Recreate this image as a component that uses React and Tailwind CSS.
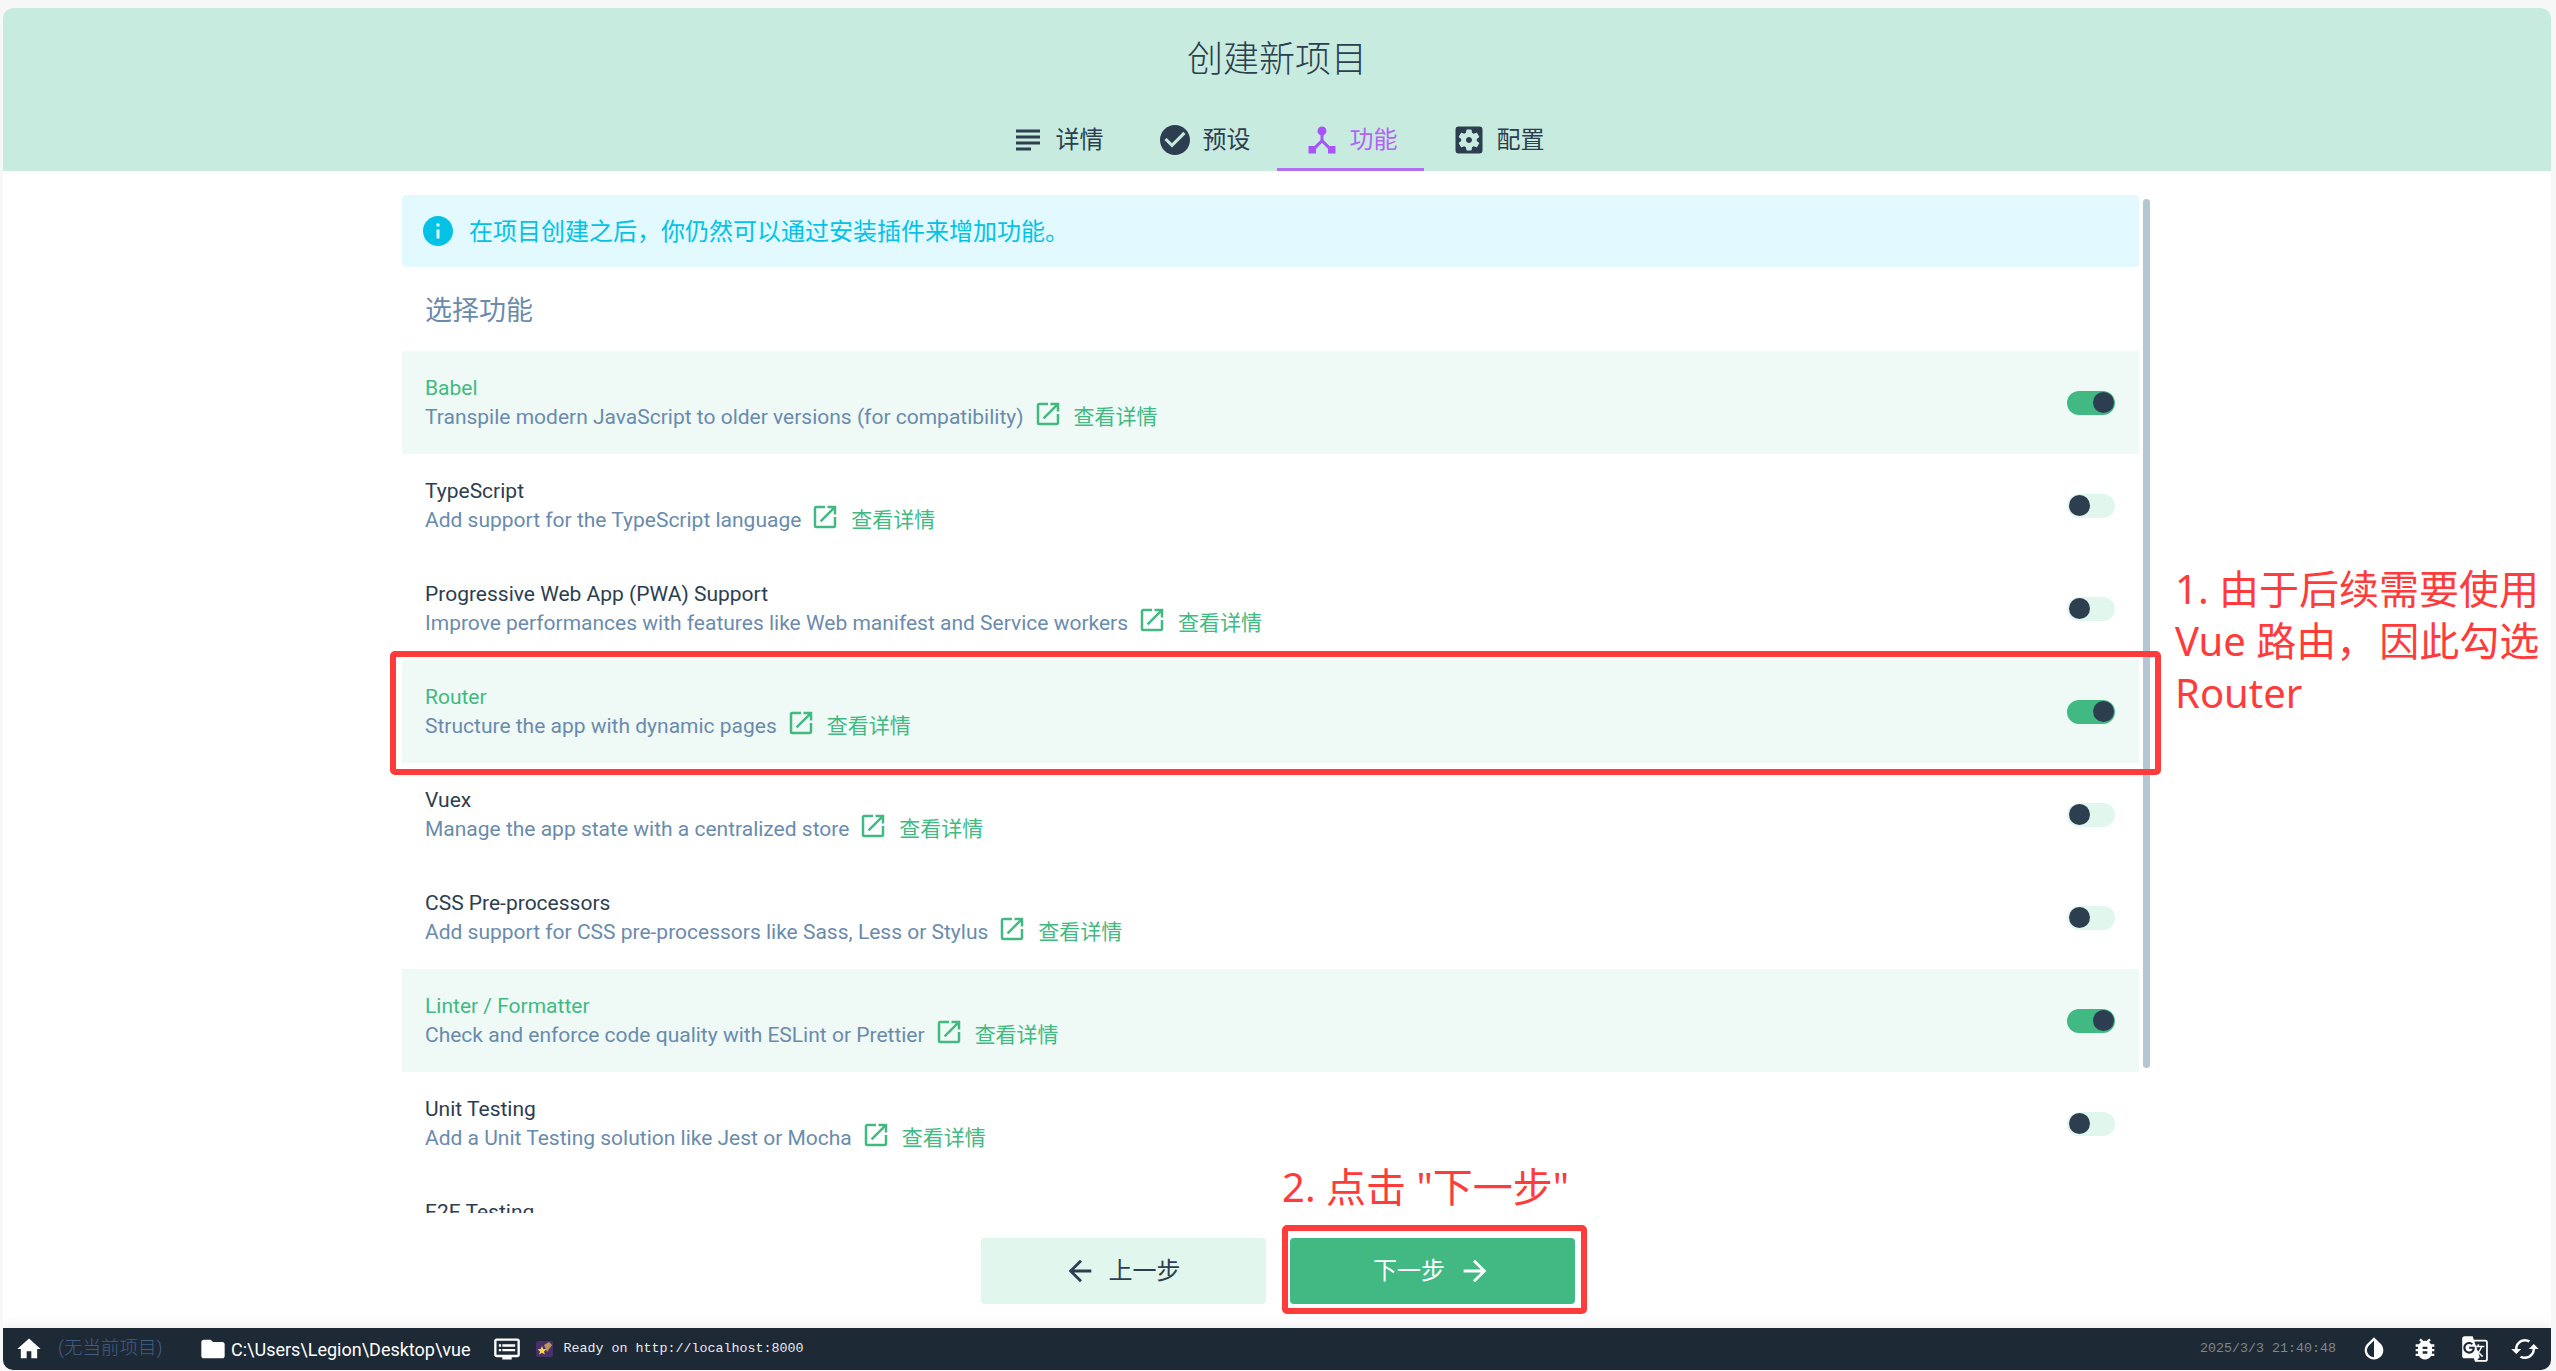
import {
  MdSubject, MdCheckCircle, MdDeviceHub, MdSettingsApplications, MdInfo, MdOpenInNew,
  MdArrowBack, MdArrowForward, MdHome, MdFolder, MdDvr, MdInvertColors, MdBugReport, MdGTranslate, MdCached,
} from "react-icons/md";

const cjk = "font-['Roboto','Noto_Sans_CJK_SC',sans-serif]";

const features = [
  { name: "Babel", desc: "Transpile modern JavaScript to older versions (for compatibility)", on: true },
  { name: "TypeScript", desc: "Add support for the TypeScript language" },
  { name: "Progressive Web App (PWA) Support", desc: "Improve performances with features like Web manifest and Service workers" },
  { name: "Router", desc: "Structure the app with dynamic pages", on: true },
  { name: "Vuex", desc: "Manage the app state with a centralized store" },
  { name: "CSS Pre-processors", desc: "Add support for CSS pre-processors like Sass, Less or Stylus" },
  { name: "Linter / Formatter", desc: "Check and enforce code quality with ESLint or Prettier", on: true },
  { name: "Unit Testing", desc: "Add a Unit Testing solution like Jest or Mocha" },
  { name: "E2E Testing", desc: "Add an End-to-End testing solution to the app like Cypress or Nightwatch" },
];

function Tab({ icon: Icon, label, active }) {
  return (
    <div className={`relative flex h-[60px] w-[147px] items-center justify-center gap-[10px] pb-[3px] ${active ? "text-[#b163f5]" : "text-[#2c3e50]"}`}>
      <Icon className={`h-[36px] w-[36px] ${active ? "text-[#a855f7]" : ""}`} />
      <span className="text-[24px] leading-none">{label}</span>
      {active && <div className="absolute inset-x-0 bottom-0 h-[3px] bg-[#b36ff0]" />}
    </div>
  );
}

function Switch({ on }) {
  return (
    <div className={`flex h-[24px] w-[48px] items-center rounded-full px-[1.5px] ${on ? "justify-end bg-[#42b983]" : "justify-start bg-[#e1f7ee]"}`}>
      <div className="h-[21px] w-[21px] rounded-full bg-[#2c3e50]" />
    </div>
  );
}

function FeatureRow({ name, desc, on }) {
  return (
    <div className={`flex h-[103px] shrink-0 items-center justify-between pl-[23px] pr-[24px] ${on ? "bg-[#eff9f5]" : ""}`}>
      <div className="flex flex-col">
        <div className={`text-[21px] leading-[30px] ${on ? "text-[#42b983]" : "text-[#2c3e50]"}`}>{name}</div>
        <div className="flex h-[30px] items-center text-[21px] text-[#6a8bad]">
          <span>{desc}</span>
          <MdOpenInNew className="relative -top-[4px] ml-[9px] h-[30px] w-[30px] text-[#42b983]" />
          <span className="ml-[11px] pt-[1px] text-[21px] text-[#42b983]">查看详情</span>
        </div>
      </div>
      <Switch on={on} />
    </div>
  );
}

function StarBadge() {
  return (
    <svg viewBox="0 0 17 16" className="h-[16px] w-[17px]">
      <rect width="17" height="16" rx="2" fill="#4a2f6b" />
      <path d="M8 4 L13 1 L16 4 L11 11 Z" fill="#b8935a" />
      <path d="M6 5 L7.3 8 L10.5 8.3 L8 10.4 L8.8 13.5 L6 11.8 L3.2 13.5 L4 10.4 L1.5 8.3 L4.7 8 Z" fill="#f6d743" />
    </svg>
  );
}

export default function App() {
  return (
    <div className={`relative flex h-[1371px] w-full flex-col overflow-hidden bg-[#f7f7f7] pb-[1px] pl-[3px] pr-[5px] pt-[8px] ${cjk}`}>
      <div className="flex flex-1 flex-col overflow-hidden rounded-[10px] bg-white">
        <header className="flex h-[163px] shrink-0 flex-col items-center justify-between bg-[#c8ebdf]">
          <h1 className="mt-[29px] text-[36px] font-light leading-[46px] text-[#2c3e50]">创建新项目</h1>
          <nav className="flex">
            <Tab icon={MdSubject} label="详情" />
            <Tab icon={MdCheckCircle} label="预设" />
            <Tab icon={MdDeviceHub} label="功能" active />
            <Tab icon={MdSettingsApplications} label="配置" />
          </nav>
        </header>

        <main className="flex h-[1042px] shrink-0 pl-[399px] pt-[24px]">
          <div className="flex w-[1737px] flex-col overflow-hidden">
            <div className="flex h-[72px] shrink-0 items-center gap-[13px] rounded-[4px] bg-[#e1f9ff] pl-[18px] text-[24px] text-[#03c2e6]">
              <MdInfo className="h-[36px] w-[36px]" />
              <span className="pt-[2px]">在项目创建之后，你仍然可以通过安装插件来增加功能。</span>
            </div>
            <div className="flex h-[84px] shrink-0 items-center pt-[5px] pl-[23px] text-[27px] text-[#6a8bad]">选择功能</div>
            {features.map((f) => (
              <FeatureRow key={f.name} {...f} />
            ))}
          </div>
          <div className="ml-[4px] mt-[4px] h-[869px] w-[7px] rounded-full bg-[#b4c6d0]" />
        </main>

        <footer className="flex h-[115px] shrink-0 justify-center gap-[24px] pl-[2px] pt-[25px]">
          <button className="flex h-[66px] w-[285px] items-center justify-center gap-[12px] rounded-[4px] bg-[#e1f7ee] pr-[4px] text-[24px] text-[#2c3e50]">
            <MdArrowBack className="h-[34px] w-[34px]" />
            上一步
          </button>
          <button className="flex h-[66px] w-[285px] items-center justify-center gap-[13px] rounded-[4px] bg-[#42b983] text-[24px] text-white">
            下一步
            <MdArrowForward className="h-[34px] w-[34px]" />
          </button>
        </footer>

        <div className="flex h-[42px] flex-1 items-center justify-between bg-[#1d2935] shadow-[0_-4px_10px_rgba(0,0,0,0.06)]">
          <div className="flex items-center">
            <MdHome className="ml-[12px] h-[28px] w-[28px] text-white" />
            <span className="ml-[15px] w-[141px] text-[18.5px] font-light text-[#3f5f85]">(无当前项目)</span>
            <MdFolder className="h-[28px] w-[28px] text-white" />
            <span className="ml-[4px] text-[18px] text-white">C:\Users\Legion\Desktop\vue</span>
            <MdDvr className="ml-[22px] h-[28px] w-[28px] text-white" />
            <span className="ml-[15px] flex"><StarBadge /></span>
            <span className="ml-[11px] font-['Liberation_Mono',monospace] text-[13.33px] text-[#e6ebef]">Ready on http://localhost:8000</span>
          </div>
          <div className="flex items-center pr-[11px]">
            <span className="mr-[24px] font-['Liberation_Mono',monospace] text-[13.33px] text-[#7b8791]">2025/3/3 21:40:48</span>
            <MdInvertColors className="h-[28px] w-[28px] text-white" />
            <MdBugReport className="ml-[23px] h-[28px] w-[28px] text-white" />
            <MdGTranslate className="ml-[22px] h-[28px] w-[28px] text-white" />
            <MdCached className="ml-[21px] h-[30px] w-[30px] text-white" />
          </div>
        </div>
      </div>

      {/* screenshot annotations */}
      <div className="absolute left-[390px] top-[651px] h-[124px] w-[1771px] rounded-[5px] border-[6px] border-[#ff3b3b]" />
      <div className="absolute left-[1282px] top-[1225px] h-[89px] w-[305px] rounded-[5px] border-[6px] border-[#ff3b3b]" />
      <div className="absolute left-[2175px] top-[563px] w-[370px] font-['Noto_Sans','Noto_Sans_CJK_SC',sans-serif] text-[40px] leading-[52px] text-[#ff3b3b]">
        <div className="whitespace-nowrap">1. 由于后续需要使用</div>
        <div className="whitespace-nowrap">Vue 路由，<span className="ml-[3px]">因此勾选</span></div>
        <div>Router</div>
      </div>
      <div className="absolute left-[1282px] top-[1161px] whitespace-nowrap font-['Noto_Sans','Noto_Sans_CJK_SC',sans-serif] text-[40px] leading-[52px] text-[#ff3b3b]">2. 点击 "下一步"</div>
    </div>
  );
}
